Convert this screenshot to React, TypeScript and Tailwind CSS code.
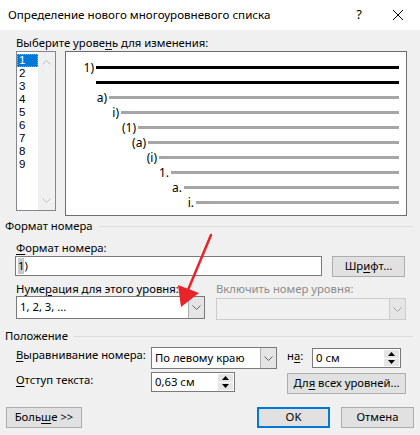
import type { ReactNode } from 'react'

type Level = { label: string; gutter: number; bold?: boolean }

// preview rows: gutter = where the line starts, relative to the box content edge
const levels: Level[] = [
  { label: '1)', gutter: 30, bold: true },
  { label: '', gutter: 30, bold: true },
  { label: 'a)', gutter: 43 },
  { label: 'i)', gutter: 55 },
  { label: '(1)', gutter: 72 },
  { label: '(a)', gutter: 82 },
  { label: '(i)', gutter: 93 },
  { label: '1.', gutter: 105 },
  { label: 'a.', gutter: 118 },
  { label: 'i.', gutter: 130 },
]

function Chevron({ up = false, color = '#606060' }: { up?: boolean; color?: string }) {
  return (
    <svg width="9" height="5" viewBox="0 0 9 5" className="block">
      <path d={up ? 'M0.5 4.5 L4.5 0.5 L8.5 4.5' : 'M0.5 0.5 L4.5 4.5 L8.5 0.5'} fill="none" stroke={color} strokeWidth="1" />
    </svg>
  )
}

function Triangle({ up }: { up?: boolean }) {
  return (
    <svg width="7" height="4" viewBox="0 0 7 4" className="block">
      <path d={up ? 'M0 4 L3.5 0 L7 4 Z' : 'M0 0 L3.5 4 L7 0 Z'} fill="#000" />
    </svg>
  )
}

function Select({ value, className, disabled = false }: { value?: string; className: string; disabled?: boolean }) {
  return (
    <div
      className={`flex ${className} border ${disabled ? 'border-[#cccccc] bg-[#f0f0f0]' : 'border-[#7a7a7a] bg-white'}`}
    >
      <div className="flex-1 truncate pl-[3px] leading-[20px] text-black">{value}</div>
      <div
        className={`flex w-[16px] items-center justify-center border-l ${
          disabled ? 'border-[#cccccc] bg-[#e5e5e5]' : 'border-[#adadad] bg-[#e5e5e5]'
        }`}
      >
        <Chevron color={disabled ? '#a0a0a0' : '#606060'} />
      </div>
    </div>
  )
}

function Spin({ value, className }: { value: string; className: string }) {
  return (
    <div className={`flex ${className} border border-[#7a7a7a] bg-white`}>
      <div className="flex-1 pl-[3px] leading-[18px] text-black">{value}</div>
      <div className="flex w-[16px] flex-col gap-[1px] py-[1px] pr-[1px]">
        <div className="flex flex-1 items-center justify-center bg-[#e5e5e5]">
          <Triangle up />
        </div>
        <div className="flex flex-1 items-center justify-center bg-[#e5e5e5]">
          <Triangle />
        </div>
      </div>
    </div>
  )
}

function Button({ children, className, focused = false }: { children: ReactNode; className: string; focused?: boolean }) {
  return (
    <div
      className={`flex ${className} items-center justify-center bg-[#e1e1e1] text-black ${
        focused ? 'border-2 border-[#0078d7]' : 'border border-[#adadad]'
      }`}
    >
      <span className="whitespace-nowrap">{children}</span>
    </div>
  )
}

function GroupHeader({ title }: { title: string }) {
  return (
    <div className="flex h-4 items-center pl-[5px] pr-[7px]">
      <span className="leading-4 text-black">{title}</span>
      <div className="ml-[6px] h-px flex-1 bg-[#dcdcdc]" />
    </div>
  )
}

export default function App() {
  return (
    <div className="relative h-[435px] w-[420px] overflow-hidden font-['Noto_Sans','Open_Sans',sans-serif] text-[11.3px] text-black">
      {/* title bar */}
      <div className="flex h-[30px] items-center bg-white pl-[8px]">
        <span className="flex-1 text-[11.6px] leading-4">Определение нового многоуровневого списка</span>
        <span className="w-[20px] text-center text-[13px]">?</span>
        <div className="ml-[24px] mr-[17px] flex w-[10px] items-center justify-center">
          <svg width="10" height="10" viewBox="0 0 10 10" className="block">
            <path d="M0 0 L10 10 M10 0 L0 10" stroke="#000" strokeWidth="1" />
          </svg>
        </div>
      </div>

      <div className="h-[405px] bg-[#f0f0f0]">
        <div className="pl-[16px] pt-[5px] leading-4">
          Выберите урове<span className="underline underline-offset-2">н</span>ь для изменения:
        </div>

        {/* level list + preview */}
        <div className="flex items-start pl-[16px]">
          <div className="flex h-[160px] w-[40px] border border-[#828790] bg-white">
            <div className="flex w-[21px] flex-col pt-[2px] font-['Liberation_Sans',sans-serif] text-[11.5px]">
              {['1', '2', '3', '4', '5', '6', '7', '8', '9'].map((n, i) => (
                <div
                  key={n}
                  className={`h-[13px] ${
                    i === 0
                      ? 'border border-dotted border-[#ff9900] bg-[#0078d7] pl-[1px] leading-[11px] text-white'
                      : 'pl-[2px] leading-[13px]'
                  }`}
                >
                  {n}
                </div>
              ))}
            </div>
            <div className="flex flex-1 flex-col items-center justify-between bg-[#f0f0f0] pb-[7px] pt-[8px]">
              <Chevron up color="#c0c0c0" />
              <Chevron color="#c0c0c0" />
            </div>
          </div>

          <div className="ml-[9px] h-[165px] w-[342px] border border-[#6d6d6d] bg-white pr-[7px] pt-[8px] text-[12px]">
            {levels.map((lv, i) => (
              <div key={i} className="flex h-[15px] items-center">
                <div className="flex justify-end pr-[2px] leading-[15px]" style={{ width: lv.gutter }}>
                  {lv.label}
                </div>
                <div className={`h-[3px] flex-1 ${lv.bold ? 'bg-black' : 'bg-[#a6a6a6]'}`} />
              </div>
            ))}
          </div>
        </div>

        {/* number format */}
        <div className="mt-[2px]">
          <GroupHeader title="Формат номера" />
        </div>
        <div className="mt-[6px] pl-[16px] leading-4">
          <span className="underline underline-offset-2">Ф</span>ормат номера:
        </div>
        <div className="flex items-start pl-[15px]">
          <div className="flex h-[20px] w-[307px] items-center border border-[#7a7a7a] bg-white pl-[2px]">
            <span className="bg-[#c8c8c8] leading-[16px]">1</span>
            <span className="leading-[16px]">)</span>
          </div>
          <Button className="ml-[10px] h-[21px] w-[73px]">
            Шр<span className="underline underline-offset-2">и</span>фт...
          </Button>
        </div>

        <div className="mt-[4px] flex h-[15px] leading-[15px]">
          <div className="w-[216px] pl-[16px]">
            Нуме<span className="underline underline-offset-2">р</span>ация для этого уровня:
          </div>
          <div className="text-[#8c8c8c]">Включить номер уровня:</div>
        </div>
        <div className="flex items-start pl-[16px]">
          <Select value="1, 2, 3, ..." className="h-[23px] w-[189px]" />
          <div className="ml-[11px] mt-[2px]">
            <Select disabled className="h-[22px] w-[190px]" />
          </div>
        </div>

        {/* position */}
        <div className="mt-[8px]">
          <GroupHeader title="Положение" />
        </div>
        <div className="mt-[3px] flex items-start pl-[16px]">
          <div className="w-[135px] whitespace-nowrap leading-4">
            <span className="underline underline-offset-2">В</span>ыравнивание номера:
          </div>
          <Select value="По левому краю" className="h-[22px] w-[126px]" />
          <div className="ml-[10px] w-[25px] pt-[1px] leading-4">
            н<span className="underline underline-offset-2">а</span>:
          </div>
          <div className="mt-[1px]">
            <Spin value="0 см" className="h-[20px] w-[89px]" />
          </div>
        </div>
        <div className="mt-[3px] flex items-start pl-[16px]">
          <div className="w-[135px] whitespace-nowrap leading-4">
            <span className="underline underline-offset-2">О</span>тступ текста:
          </div>
          <Spin value="0,63 см" className="h-[20px] w-[84px]" />
          <Button className="ml-[52px] mt-[1px] h-[21px] w-[119px]">
            Дл<span className="underline underline-offset-2">я</span> всех уровней...
          </Button>
        </div>

        {/* dialog buttons */}
        <div className="mt-[13px] flex items-start pl-[6px]">
          <Button className="h-[21px] w-[76px]">
            Боль<span className="underline underline-offset-2">ш</span>е &gt;&gt;
          </Button>
          <Button focused className="ml-[175px] h-[21px] w-[73px]">
            OK
          </Button>
          <Button className="ml-[11px] h-[21px] w-[73px]">Отмена</Button>
        </div>
      </div>

      {/* red pointer arrow */}
      <svg className="pointer-events-none absolute left-0 top-0" width="420" height="435" viewBox="0 0 420 435">
        <line x1="211" y1="235" x2="188" y2="290" stroke="#e8232a" strokeWidth="2.5" strokeLinecap="round" />
        <path d="M181 307 L178 285 L199 293 Z" fill="#e8232a" />
      </svg>
    </div>
  )
}
